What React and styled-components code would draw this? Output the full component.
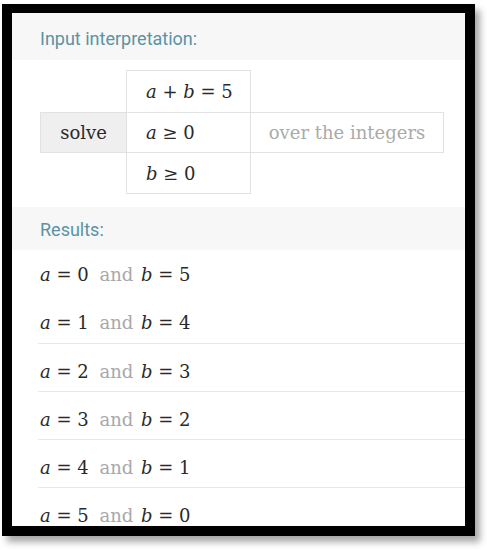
import React from "react";
import styled, { createGlobalStyle } from "styled-components";

const Global = createGlobalStyle`
  html, body { margin: 0; padding: 0; background: #ffffff; }
  body { width: 487px; height: 550px; overflow: hidden; }
`;

const Frame = styled.div`
  box-sizing: border-box;
  margin: 4px 0 0 2px;
  width: 473px;
  height: 532px;
  border: 10px solid #000;
  border-top-width: 9px;
  box-shadow: 5px 6px 7px rgba(0, 0, 0, 0.35);
  background: #fff;
  overflow: hidden;
  display: flex;
  flex-direction: column;
`;

const PodHeader = styled.div`
  flex: none;
  height: ${(p) => p.$h}px;
  box-sizing: border-box;
  background: #f7f7f7;
  padding: ${(p) => p.$top}px 0 0 28px;
  font-family: Roboto, "Liberation Sans", sans-serif;
  font-size: 18px;
  color: #5a93a5;
  line-height: 20px;
`;

const InputArea = styled.div`
  flex: none;
  height: 147px;
  box-sizing: border-box;
  padding: 10px 0 0 28px;
`;

const Grid = styled.table`
  border-collapse: collapse;
  font-family: "DejaVu Serif", serif;
  font-size: 18px;
  color: #2a2a2a;
`;

const Cell = styled.td`
  padding: 0;
  height: ${(p) => p.$h}px;
  width: ${(p) => p.$w}px;
  text-align: ${(p) => p.$align || "left"};
  padding-left: ${(p) => p.$pl || 0}px;
  border: ${(p) => (p.$empty ? "none" : "1px solid #e2e2e2")};
  background: ${(p) => p.$bg || "transparent"};
  color: ${(p) => p.$color || "#2a2a2a"};
  box-sizing: border-box;
  vertical-align: middle;
`;

const I = styled.i`
  font-style: italic;
`;

const Results = styled.div`
  flex: 1;
  display: flex;
  flex-direction: column;
`;

const Row = styled.div`
  flex: none;
  height: ${(p) => p.$h}px;
  box-sizing: border-box;
  margin-left: 26px;
  padding: ${(p) => p.$top}px 0 0 2px;
  border-top: ${(p) => (p.$line ? "1px solid #e8e8e8" : "none")};
  font-family: "DejaVu Serif", serif;
  font-size: 18px;
  line-height: 22px;
  color: #2a2a2a;
  white-space: pre;
`;

const And = styled.span`
  color: #a8a8a8;
  margin: 0 2px 0 5px;
`;

const results = [
  [0, 5],
  [1, 4],
  [2, 3],
  [3, 2],
  [4, 1],
  [5, 0],
];

export default function App() {
  return (
    <>
      <Global />
      <Frame>
        <PodHeader $h={47} $top={16}>Input interpretation:</PodHeader>
        <InputArea>
          <Grid>
            <tbody>
              <tr>
                <Cell $empty $w={86} $h={42} />
                <Cell $w={124} $h={42} $pl={19}>
                  <I>a</I> + <I>b</I> = 5
                </Cell>
                <Cell $empty $w={193} />
              </tr>
              <tr>
                <Cell $w={86} $h={40} $align="center" $bg="#efefef">
                  solve
                </Cell>
                <Cell $w={124} $h={40} $pl={19}>
                  <I>a</I> ≥ 0
                </Cell>
                <Cell $w={193} $h={40} $align="center" $color="#aaaaaa">
                  over the integers
                </Cell>
              </tr>
              <tr>
                <Cell $empty $h={41} />
                <Cell $w={124} $h={41} $pl={19}>
                  <I>b</I> ≥ 0
                </Cell>
                <Cell $empty />
              </tr>
            </tbody>
          </Grid>
        </InputArea>
        <PodHeader $h={43} $top={13}>Results:</PodHeader>
        <Results>
          {results.map(([a, b], i) => (
            <Row key={a} $h={i === 0 ? 45 : 48} $line={i > 1} $top={i === 0 ? 14 : 17}>
              <I>a</I> = {a} <And>and</And> <I>b</I> = {b}
            </Row>
          ))}
        </Results>
      </Frame>
    </>
  );
}
